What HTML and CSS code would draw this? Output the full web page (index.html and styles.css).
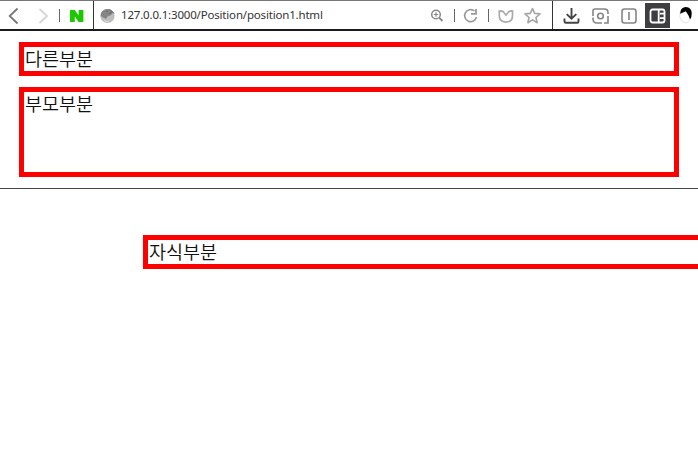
FILE: index.html
```html
<!DOCTYPE html>
<html lang="ko">
<head>
<meta charset="utf-8">
<title>Position</title>
<link rel="stylesheet" href="styles.css">
</head>
<body>
<header class="toolbar">
  <nav class="nav">
    <svg class="icon" width="26" height="28" viewBox="0 0 26 28"><path d="M17.5 7.5 9.7 15l7.8 7.5" stroke="#777" stroke-width="1.8"/></svg>
    <svg class="icon" width="31" height="28" viewBox="0 0 31 28"><path d="M13.5 8 21 15l-7.5 7" stroke="#d5d5d5" stroke-width="1.8"/></svg>
    <span class="bar"></span>
    <svg class="icon" width="32" height="28" viewBox="0 0 32 28"><path d="M9 9h4.8l3.8 5.6V9h4.8v12h-4.8l-3.8-5.6V21H9z" fill="#1ec800"/></svg>
  </nav>
  <div class="address">
    <svg class="icon" width="15" height="28" viewBox="0 0 15 28"><circle cx="7.5" cy="15" r="7.1" fill="#bdbdbd"/><path d="M1 12Q4 7 10 8.2l3.5 3.3-3.3 3.1-2.7 1-1.6 2.5L.6 15z" fill="#858585"/><path d="M4 19q2 2.5 5 1.2" stroke="#ddd"/><path d="M10 8.5q2 2 4 4M9 13l3-2M6 10l2 1" stroke="#666"/></svg>
    <span class="url">127.0.0.1:3000/Position/position1.html</span>
  </div>
  <div class="actions">
    <svg class="icon" width="26" height="28" viewBox="0 0 26 28"><circle cx="12" cy="13.5" r="4.3" stroke="#888" stroke-width="1.5"/><path d="m15.3 16.8 3.2 3.2" stroke="#888" stroke-width="1.9"/><path d="M9.8 13.5h4.4M12 11.3v4.4" stroke="#888" stroke-width="1.2"/></svg>
    <span class="bar bar-zoom"></span>
    <svg class="icon" width="31" height="28" viewBox="0 0 31 28"><path d="M19.5 10A6 6 0 1 0 21.5 16" stroke="#999" stroke-width="1.6"/><path d="M21 8v4.8H16" stroke="#999" stroke-width="1.8"/></svg>
    <span class="bar"></span>
    <svg class="icon" width="29" height="28" viewBox="0 0 29 28"><path d="M9.3 10q2.8-.2 4.2 1l2.5 3.2 2.4-3.2q1.5-1.2 4.1-1v5q0 5.8-6.6 6.1-6.5-.3-6.6-6.1z" stroke="#aaa" stroke-width="1.7"/></svg>
    <svg class="icon" width="31" height="28" viewBox="0 0 31 28"><path d="m13.5 7.6 2.2 4.8 5.3.5-4 3.6 1.1 5.2-4.6-2.8-4.6 2.8L10 16.5l-4-3.6 5.3-.5z" stroke="#a5a5a5" stroke-width="1.6" stroke-linejoin="round"/></svg>
  </div>
  <div class="extensions">
    <svg class="icon" width="34" height="28" viewBox="0 0 34 28"><path d="M18.5 7v10.5m-4.8-4.4 4.8 4.6 4.8-4.6M11.5 17.5v3q0 1.3 1.3 1.3h11.4q1.3 0 1.3-1.3v-3" stroke="#444" stroke-width="1.9"/></svg>
    <svg class="icon" width="29" height="28" viewBox="0 0 29 28"><path d="M6 15V10q0-2 2-2h9.5q3.5 0 3.5 3.5V13M21 15v7h-4M6 16.5V18q0 4 4 4h5" stroke="#858585" stroke-width="1.6"/><circle cx="13.5" cy="15" r="2.8" stroke="#858585" stroke-width="1.6"/></svg>
    <svg class="icon" width="29" height="28" viewBox="0 0 29 28"><rect x="6" y="8" width="14" height="14" rx="2.5" stroke="#858585" stroke-width="1.6"/><path d="M13 11v8" stroke="#858585" stroke-width="1.6"/></svg>
    <span class="active-tool"><svg width="25" height="25" viewBox="0 0 25 25" fill="none"><rect x="5.5" y="6.5" width="14" height="13" rx="2" stroke="#fff" stroke-width="1.8"/><path d="M13.7 6v14M15 10.7h5M15 15.2h5" stroke="#fff" stroke-width="1.8"/></svg></span>
    <svg class="icon" width="27" height="28" viewBox="0 0 27 28"><path d="M10 11q-1 6 2 9.5l5 1.5 4-5V11" fill="#fff" stroke="#e5e5e5"/><path d="M10.2 13Q10 6.5 15.5 6q6-.2 6.2 6.5.1 4-1.7 6l-1.5-4-2.7-4.2-5 2.2z" fill="#000"/></svg>
  </div>
</header>
<main>
  <section class="stage">
    <div class="box">다른부분</div>
    <div class="box parent">부모부분</div>
  </section>
  <div class="box child">자식부분</div>
</main>
</body>
</html>
```
FILE: styles.css
```css
* { box-sizing: border-box; }
body {
  margin: 0;
  height: 458px;
  overflow: hidden;
  background: #fff;
  color: #111;
  font-family: "Noto Sans CJK KR", sans-serif;
}
.toolbar {
  display: flex;
  height: 31px;
  border-top: 1px solid #777;
  border-bottom: 2px solid #1c1a1c;
}
.nav, .address, .actions, .extensions { display: flex; align-items: center; }
.nav { width: 94px; border-right: 1px solid #333; }
.address { flex: 1; min-width: 0; padding-left: 6px; }
.actions { width: 128px; }
.extensions { width: 146px; border-left: 1px solid #333; overflow: hidden; }
.icon { display: block; flex: none; fill: none; margin-top: -1px; }
.bar { flex: none; width: 1px; height: 13px; margin: 1px 1px 0 2px; background: #666; }
.bar-zoom { margin-left: 4px; margin-right: 0; }
.url {
  margin-left: 6px;
  font: 11.5px/18px "Noto Sans", sans-serif;
  color: #333;
  letter-spacing: -0.18px;
  white-space: nowrap;
}
.active-tool { flex: none; width: 25px; height: 25px; background: #3e3e40; }
.active-tool svg { display: block; }
.stage { padding: 11px 19px; border-bottom: 1px solid #444; }
.box {
  height: 34px;
  padding-left: 1px;
  border: 5px solid #f00;
  font-size: 18.5px;
  font-weight: 350;
  line-height: 23px;
}
.parent { height: 90px; margin-top: 11px; }
.child { margin: 46px 0 0 143px; border-right: 0; line-height: 22px; }
```
